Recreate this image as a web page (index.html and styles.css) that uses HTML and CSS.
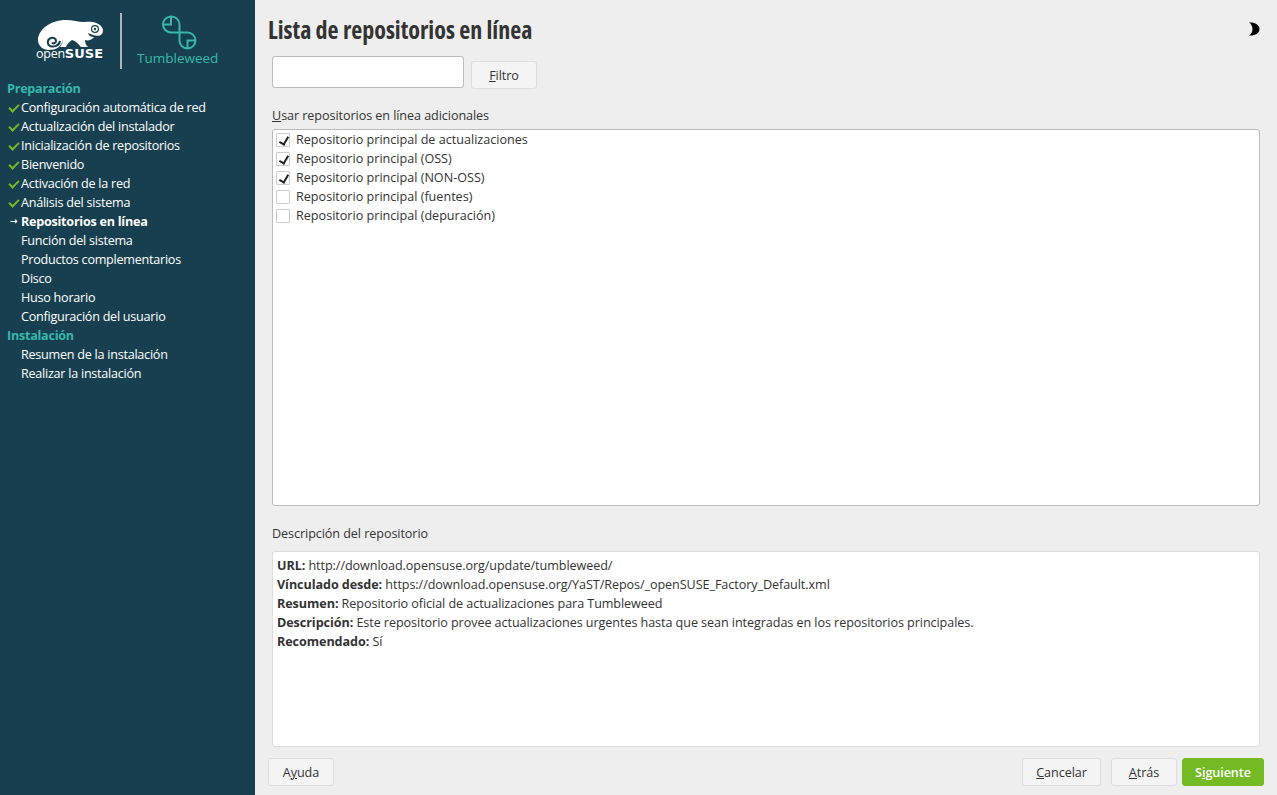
FILE: index.html
```html
<!DOCTYPE html>
<html lang="es">
<head>
  <meta charset="UTF-8" />
  <title>Lista de repositorios en línea</title>
  <link rel="stylesheet" href="styles.css">
</head>
<body>
  <aside class="sidebar">
    <div class="brand">
      <div class="suse">
        <svg class="gecko" viewBox="36 18 70 33" width="70" height="33">
          <path fill="#fff" d="M38 40C38 30 50 20 66 20C73 20 78 22 84 22C90 21 98 22 101 26C103 28 103.5 31 102.5 33C101 36 97 36.5 93 35L88 33C89 36 91 37 94 37C92 40 88 41 85 40C85 43 86 45 88 47L81 47C78 44 76 41 72 40C69 42 67 44 66 47L60 47C62 44 63 42 63 40C61 47 56 50 49 50C43 50 38 46 38 40Z"/>
          <path fill="none" stroke="#183f4f" stroke-width="2" d="M52 42.500C53 44 56 43.500 56 41C56 38 52 37 50 38.500C47 40 47 44.500 50 46C54 47.500 59 46 60 41"/>
          <circle cx="95" cy="29" r="3.400" fill="#fff" stroke="#183f4f" stroke-width="1.200"/>
          <circle cx="95" cy="29" r="1.200" fill="#183f4f"/>
        </svg>
        <div class="suse-name"><span class="open">open</span><span class="caps">SUSE</span></div>
      </div>
      <div class="brand-rule"></div>
      <div class="tw">
        <svg class="tw-mark" viewBox="160 14 40 38" width="40" height="38">
          <path fill="none" stroke="#35b9ab" stroke-width="2" d="M171 32.500H187.500A8 8 0 1 1 179.500 40.500V24.500A8.250 8 0 1 0 171 32.500ZM171 16.500V24.500H163M187.500 48.500V40.500H195.500"/>
        </svg>
        <div class="tw-name">Tumbleweed</div>
      </div>
    </div>

    <ul class="steps">
      <li class="group">Preparación</li>
      <li class="step done">Configuración automática de red</li>
      <li class="step done">Actualización del instalador</li>
      <li class="step done">Inicialización de repositorios</li>
      <li class="step done">Bienvenido</li>
      <li class="step done">Activación de la red</li>
      <li class="step done">Análisis del sistema</li>
      <li class="step current">Repositorios en línea</li>
      <li class="step">Función del sistema</li>
      <li class="step">Productos complementarios</li>
      <li class="step">Disco</li>
      <li class="step">Huso horario</li>
      <li class="step">Configuración del usuario</li>
      <li class="group">Instalación</li>
      <li class="step">Resumen de la instalación</li>
      <li class="step">Realizar la instalación</li>
    </ul>
  </aside>

  <main class="main">
    <header class="title-bar">
      <h1>Lista de repositorios en línea</h1>
      <svg class="moon" viewBox="0 0 12 14" width="12" height="14">
        <path fill="#000" d="M1 0.500C6.500 0 11.500 2.500 11.500 7C11.500 11.500 6.500 14 1 13.500C3.500 12 4.500 9.500 4.500 7C4.500 4.500 3.500 2 1 0.500Z"/>
      </svg>
    </header>

    <div class="content">
      <div class="filter-row">
        <input class="filter-input" type="text" />
        <button class="btn filter-btn"><u>F</u>iltro</button>
      </div>

      <div class="field-label"><u>U</u>sar repositorios en línea adicionales</div>
      <ul class="repo-list">
        <li class="repo"><span class="box checked"></span>Repositorio principal de actualizaciones</li>
        <li class="repo"><span class="box checked"></span>Repositorio principal (OSS)</li>
        <li class="repo"><span class="box checked"></span>Repositorio principal (NON-OSS)</li>
        <li class="repo"><span class="box"></span>Repositorio principal (fuentes)</li>
        <li class="repo"><span class="box"></span>Repositorio principal (depuración)</li>
      </ul>

      <div class="field-label desc-label">Descripción del repositorio</div>
      <div class="desc-box">
        <p><b>URL:</b> http://download.opensuse.org/update/tumbleweed/</p>
        <p><b>Vínculado desde:</b> https://download.opensuse.org/YaST/Repos/_openSUSE_Factory_Default.xml</p>
        <p><b>Resumen:</b> Repositorio oficial de actualizaciones para Tumbleweed</p>
        <p><b>Descripción:</b> Este repositorio provee actualizaciones urgentes hasta que sean integradas en los repositorios principales.</p>
        <p><b>Recomendado:</b> Sí</p>
      </div>
    </div>

    <footer class="actions">
      <button class="btn help">A<u>y</u>uda</button>
      <div class="spacer"></div>
      <button class="btn cancel"><u>C</u>ancelar</button>
      <button class="btn back"><u>A</u>trás</button>
      <button class="btn next">S<u>i</u>guiente</button>
    </footer>
  </main>
</body>
</html>
```

FILE: styles.css
```css
* {
  box-sizing: border-box;
}

body {
  margin: 0;
  height: 795px;
  display: flex;
  overflow: hidden;
  background: #eeeeee;
  color: #333;
  font-family: "Open Sans", sans-serif;
  font-size: 12.6px;
  letter-spacing: -0.07px;
}

.sidebar {
  width: 255px;
  background: #183f4f;
  color: #fff;
  flex-shrink: 0;
  letter-spacing: -0.25px;
}

.brand {
  height: 79px;
  display: flex;
  padding: 13px 0 0 37px;
}

.suse {
  width: 66px;
  padding-top: 5px;
}

.gecko {
  display: block;
  margin-left: -1px;
}

.suse-name {
  margin-top: -4px;
  line-height: 14px;
  white-space: nowrap;
  margin-left: -1px;
}

.open {
  font-size: 12.5px;
}

.caps {
  font-family: "DejaVu Sans", sans-serif;
  font-weight: 700;
  font-size: 13px;
  letter-spacing: 0;
}

.brand-rule {
  width: 2px;
  height: 56px;
  margin-left: 17px;
  background: #a9b8be;
}

.tw {
  margin-left: 15px;
  width: 80px;
  text-align: center;
}

.tw-mark {
  display: block;
  margin: 1px 0 0 23px;
}

.tw-name {
  margin-top: -2px;
  color: #35b9ab;
  font-size: 13.5px;
  letter-spacing: 0;
  line-height: 17px;
}

.steps {
  list-style: none;
  margin: 0;
  padding: 0;
}

.steps li {
  height: 19px;
  line-height: 19px;
  white-space: nowrap;
}

.group {
  padding-left: 7px;
  font-weight: 700;
  color: #35b9ab;
}

.step {
  padding-left: 21px;
  position: relative;
}

.step.current {
  font-weight: 700;
}

.step.done::before {
  content: "";
  position: absolute;
  left: 9px;
  top: 6px;
  width: 8px;
  height: 4px;
  border-left: 2px solid #73ba25;
  border-bottom: 2px solid #73ba25;
  transform: rotate(-45deg);
}

.step.current::before {
  content: "→";
  position: absolute;
  left: 10px;
  top: 0;
  font-family: "DejaVu Sans", sans-serif;
  font-size: 9px;
}

.main {
  flex: 1;
  min-width: 0;
  display: flex;
  flex-direction: column;
  padding: 0 13px 9px;
}

.title-bar {
  height: 56px;
  display: flex;
  justify-content: space-between;
  align-items: center;
  padding-top: 2px;
}

h1 {
  margin: 0;
  font-size: 24px;
  font-weight: 700;
  font-stretch: 75%;
  letter-spacing: 0;
  color: #333;
}

.moon {
  margin-right: 4px;
}

.content {
  flex: 1;
  display: flex;
  flex-direction: column;
  padding: 0 4px;
}

.filter-row {
  display: flex;
  gap: 7px;
  height: 33px;
}

.filter-input {
  width: 192px;
  height: 32px;
  background: #fff;
  border: 1px solid #bbb;
  border-radius: 3px;
}

.btn {
  height: 28px;
  padding: 0;
  font: inherit;
  letter-spacing: inherit;
  color: #333;
  background: #f4f4f4;
  border: 1px solid #ddd;
  border-radius: 3px;
}

.filter-btn {
  width: 66px;
  margin-top: 5px;
}

.field-label {
  margin-top: 17px;
  height: 23px;
  line-height: 20px;
}

.repo-list {
  list-style: none;
  margin: 0;
  padding: 0 3px;
  height: 377px;
  background: #fff;
  border: 1px solid #bbb;
  border-radius: 3px;
  letter-spacing: 0;
}

.repo {
  height: 19px;
  line-height: 19px;
  display: flex;
  align-items: center;
  gap: 6px;
}

.box {
  width: 14px;
  height: 14px;
  background: #fff;
  border: 1px solid #ccc;
  border-radius: 1px;
  position: relative;
}

.box.checked::after {
  content: "";
  position: absolute;
  left: 4px;
  top: 1px;
  width: 4px;
  height: 8px;
  border-right: 2px solid #222;
  border-bottom: 2px solid #222;
  transform: rotate(30deg);
}

.desc-label {
  margin-top: 18px;
  height: 27px;
}

.desc-box {
  height: 196px;
  padding: 4px 4px;
  background: #fff;
  border: 1px solid #ddd;
  border-radius: 3px;
}

.desc-box p {
  margin: 0;
  height: 19px;
  line-height: 19px;
}

.actions {
  display: flex;
  gap: 10px;
  height: 28px;
}

.spacer {
  flex: 1;
}

.help {
  width: 66px;
}

.cancel {
  width: 79px;
}

.back {
  width: 66px;
}

.next {
  width: 82px;
  margin-left: -5px;
  background: #73ba25;
  border-color: #73ba25;
  color: #fff;
  font-weight: 600;
}
```
